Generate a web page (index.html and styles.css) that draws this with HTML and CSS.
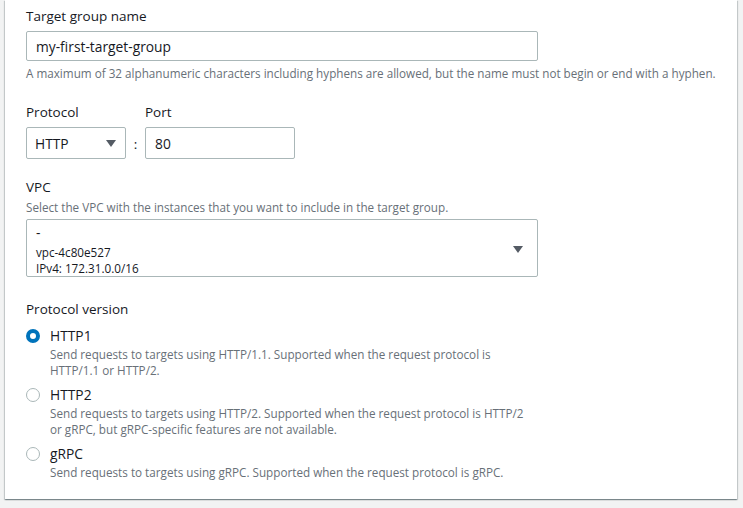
FILE: index.html
```html
<!DOCTYPE html>
<html>
<head>
<meta charset="utf-8">
<link rel="stylesheet" href="styles.css">
</head>
<body>
<div class="page">
  <div class="card">
    <div class="field">
      <div class="label">Target group name</div>
      <div class="input wide">my-first-target-group</div>
      <div class="hint hint-after">A maximum of 32 alphanumeric characters including hyphens are allowed, but the name must not begin or end with a hyphen.</div>
    </div>

    <div class="field proto-row">
      <div class="proto-col">
        <div class="label">Protocol</div>
        <div class="select small">
          <span>HTTP</span>
          <svg class="caret" width="10" height="7" viewBox="0 0 10 7"><path d="M0 0 H10 L5 7 Z" fill="#545b64"/></svg>
        </div>
      </div>
      <div class="colon">:</div>
      <div class="port-col">
        <div class="label">Port</div>
        <div class="input port">80</div>
      </div>
    </div>

    <div class="field vpc">
      <div class="label">VPC</div>
      <div class="hint">Select the VPC with the instances that you want to include in the target group.</div>
      <div class="select big">
        <div class="vpc-lines">
          <div class="vpc-name">-</div>
          <div class="vpc-sub">vpc-4c80e527</div>
          <div class="vpc-sub">IPv4: 172.31.0.0/16</div>
        </div>
        <svg class="caret" width="10" height="7" viewBox="0 0 10 7"><path d="M0 0 H10 L5 7 Z" fill="#545b64"/></svg>
      </div>
    </div>

    <div class="field versions">
      <div class="label">Protocol version</div>
      <div class="radios">
        <div class="radio-row">
          <span class="radio checked"></span>
          <div class="radio-text">
            <div class="radio-label">HTTP1</div>
            <div class="radio-desc">Send requests to targets using HTTP/1.1. Supported when the request protocol is<br>HTTP/1.1 or HTTP/2.</div>
          </div>
        </div>
        <div class="radio-row">
          <span class="radio"></span>
          <div class="radio-text">
            <div class="radio-label">HTTP2</div>
            <div class="radio-desc">Send requests to targets using HTTP/2. Supported when the request protocol is HTTP/2<br>or gRPC, but gRPC-specific features are not available.</div>
          </div>
        </div>
        <div class="radio-row">
          <span class="radio"></span>
          <div class="radio-text">
            <div class="radio-label">gRPC</div>
            <div class="radio-desc">Send requests to targets using gRPC. Supported when the request protocol is gRPC.</div>
          </div>
        </div>
      </div>
    </div>
  </div>
</div>
</body>
</html>
```

FILE: styles.css
```css
* { box-sizing: border-box; }
html, body {
  margin: 0;
  padding: 0;
  background: #f2f3f3;
  font-family: "Open Sans", "Liberation Sans", sans-serif;
  color: #16191f;
}
.page {
  padding: 0 6px 0 5px;
  height: 508px;
}
.card {
  background: #fff;
  padding: 6px 20px 19px 21px;
  box-shadow: 0 1px 1px 0 rgba(0,28,36,.3), 1px 1px 1px 0 rgba(0,28,36,.15), -1px 1px 1px 0 rgba(0,28,36,.15);
}
.label {
  font-size: 13.5px;
  line-height: 20px;
  color: #16191f;
}
.hint {
  font-size: 11.7px;
  line-height: 16px;
  color: #687078;
}
.hint-after { margin-top: 4px; }
.input {
  border: 1px solid #aab7b8;
  border-radius: 2px;
  font-size: 13.8px;
  color: #16191f;
  display: flex;
  align-items: center;
}
.wide {
  width: 512px;
  height: 30px;
  margin-top: 5px;
  padding-left: 9px;
}
.proto-row {
  display: flex;
  align-items: flex-end;
  margin-top: 21px;
}
.proto-col .label, .port-col .label { margin-bottom: 5px; }
.select {
  border: 1px solid #aab7b8;
  border-radius: 2px;
  display: flex;
  align-items: center;
  justify-content: space-between;
  font-size: 13.8px;
}
.small {
  width: 100px;
  height: 32px;
  padding: 0 9px 0 8px;
}
.colon {
  width: 19px;
  height: 32px;
  display: flex;
  align-items: center;
  justify-content: center;
  font-size: 13.5px;
  padding-top: 1px;
}
.port {
  width: 150px;
  height: 32px;
  padding-left: 9px;
}
.vpc { margin-top: 18px; }
.vpc .hint { margin-top: 2px; }
.big {
  width: 512px;
  height: 58px;
  margin-top: 4px;
  padding: 2px 14px 0 9px;
}
.vpc-name {
  font-size: 13.8px;
  line-height: 22px;
}
.vpc-sub {
  font-size: 11.7px;
  line-height: 16px;
}
.versions { margin-top: 22px; }
.radios {
  margin-top: 8px;
  display: flex;
  flex-direction: column;
  gap: 8px;
}
.radio-row {
  display: flex;
  align-items: flex-start;
}
.radio {
  width: 14px;
  height: 14px;
  border-radius: 50%;
  border: 1px solid #aab7b8;
  margin-top: 2px;
  margin-right: 10px;
  flex: none;
  background: #fff;
}
.radio.checked {
  border: 4px solid #0073bb;
}
.radio-label {
  font-size: 13.8px;
  line-height: 18px;
}
.radio-desc {
  font-size: 11.7px;
  line-height: 16px;
  color: #687078;
  margin-top: 1px;
}
```
